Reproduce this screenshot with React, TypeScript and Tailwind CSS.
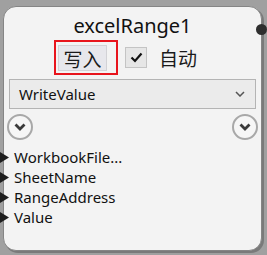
import React from "react";

const ports = ["WorkbookFile...", "SheetName", "RangeAddress", "Value"];

function Expander() {
  return (
    <div className="flex h-[26px] w-[26px] items-center justify-center rounded-full border-2 border-[#a8a8a8] bg-[#f6f6f6]">
      <svg width="12" height="8" viewBox="0 0 12 8">
        <polyline points="1.5,1.5 6,6 10.5,1.5" fill="none" stroke="#3a3a3a" strokeWidth="2.8" />
      </svg>
    </div>
  );
}

export default function App() {
  return (
    <div className="relative h-[255px] w-[267px] overflow-hidden bg-[#a0a0a0] pt-[6px] pl-[3px]" style={{ fontFamily: '"Noto Sans", "Noto Sans CJK SC", sans-serif' }}>
      <div className="relative flex h-[245px] w-[259px] flex-col rounded-[13px] border border-[#858585] bg-[#f3f3f3] shadow-[2px_2px_0_#7a7a7a]">
        <div className="pt-[7px] text-center text-[20px] leading-[24px] text-[#111]">excelRange1</div>

        <div className="mt-[2px] flex items-center pl-[50px]">
          <div className="border-2 border-[#e8141c] pt-[3px] pb-[2px] pl-[2px] pr-[9px]">
            <div className="flex h-[26px] w-[49px] items-center justify-center border border-[#d2d2d6] bg-[#e7e7ec] text-[19px] leading-none text-[#1a1a1a]" style={{ fontFamily: '"Noto Sans CJK SC", sans-serif' }}>
              写入
            </div>
          </div>
          <div className="ml-[7px] flex h-[21px] w-[22px] items-center justify-center border border-[#c4c4c4] bg-[#e6e6e6]">
            <svg width="13" height="11" viewBox="0 0 13 11">
              <polyline points="1.5,5.5 5,9 11.5,1.5" fill="none" stroke="#111" strokeWidth="2.2" />
            </svg>
          </div>
          <span className="ml-[12px] text-[19px] leading-none text-[#1a1a1a]" style={{ fontFamily: '"Noto Sans CJK SC", sans-serif' }}>
            自动
          </span>
        </div>

        <div className="mx-[5px] mt-[4px] flex h-[30px] items-center justify-between border border-[#b4b4b4] bg-[#ebebeb] pl-[9px] pr-[10px]">
          <span className="text-[15px] leading-none text-[#111]">WriteValue</span>
          <svg width="10" height="6" viewBox="0 0 10 6">
            <polyline points="1,1 5,5 9,1" fill="none" stroke="#555" strokeWidth="1.5" />
          </svg>
        </div>

        <div className="mt-[5px] flex justify-between pl-[3px] pr-[3px]">
          <Expander />
          <Expander />
        </div>

        <div className="mt-[7px] flex flex-col">
          {ports.map((p) => (
            <div key={p} className="relative flex h-[20px] items-center pl-[10px] text-[15px] text-[#111]">
              <svg className="absolute left-[-4px] top-[5px]" width="9" height="11" viewBox="0 0 9 11">
                <polygon points="0,0 9,5.5 0,11" fill="#1e1e1e" />
              </svg>
              {p}
            </div>
          ))}
        </div>

        <div className="absolute right-[-6px] top-[17px] h-[11px] w-[11px] rounded-full bg-[#2e2e2e]" />
      </div>
    </div>
  );
}
